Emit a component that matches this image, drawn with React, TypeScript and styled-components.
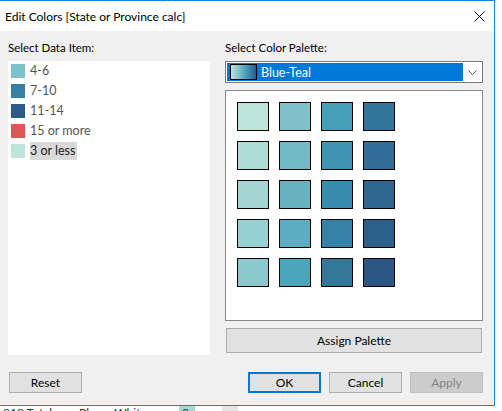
import React from 'react';
import styled, { createGlobalStyle } from 'styled-components';

const GlobalStyle = createGlobalStyle`
  html, body {
    margin: 0;
    padding: 0;
    background: #ffffff;
  }
  body {
    font-family: "Segoe UI", Lato, "Open Sans", sans-serif;
    font-size: 11.5px;
    color: #000;
  }
`;

const legend = [
    { label: '4-6', color: '#7dc1ca' },
    { label: '7-10', color: '#3580a3' },
    { label: '11-14', color: '#2d5a87' },
    { label: '15 or more', color: '#e15759' },
    { label: '3 or less', color: '#bce4d8', selected: true },
];

// column-major, light to dark
const palette = [
    ['#bce4d8', '#7fc1ca', '#449fb8', '#33759a'],
    ['#aedcd6', '#74bac6', '#3e96b3', '#316d96'],
    ['#a3d6d2', '#68b3c2', '#378dae', '#2f6690'],
    ['#97d0d0', '#5badbf', '#3582a6', '#2d5f8b'],
    ['#8bc9ce', '#4ba5bb', '#337899', '#2c5684'],
];

const Page = styled.div({
    width: '502px',
    height: '411px',
    overflow: 'hidden',
    display: 'flex',
    flexDirection: 'column',
})

const Dialog = styled.div({
    width: '495px',
    height: '406px',
    boxSizing: 'border-box',
    borderTop: '1px solid #1883d7',
    borderRight: '1px solid #1883d7',
    borderBottom: '1px solid #1883d7',
    background: '#f0f0f0',
    display: 'flex',
    flexDirection: 'column',
    flexShrink: 0,
})

const TitleBar = styled.div({
    height: '30px',
    background: '#ffffff',
    display: 'flex',
    alignItems: 'center',
    justifyContent: 'space-between',
    padding: '0 9px 0 5px',
    fontSize: '12px',
    color: '#000',
})

const CloseIcon = () => (
    <svg width="11" height="11" viewBox="0 0 11 11">
        <path d="M0.5 0.5 L10.5 10.5 M10.5 0.5 L0.5 10.5" stroke="#000" strokeWidth="1" />
    </svg>
)

const Main = styled.div({
    display: 'flex',
    gap: '15px',
    padding: '9px 0 0 8px',
})

const Column = styled.div<{ $width: number }>(p => ({
    width: `${p.$width}px`,
    display: 'flex',
    flexDirection: 'column',
}))

const Label = styled.div({
    height: '16px',
    lineHeight: '16px',
    marginBottom: '5px',
    color: '#000',
})

const ListBox = styled.div({
    height: '294px',
    background: '#ffffff',
    padding: '3px 0 0 3px',
    boxSizing: 'border-box',
    display: 'flex',
    flexDirection: 'column',
    gap: '6px',
})

const ListItem = styled.div({
    display: 'flex',
    alignItems: 'center',
    gap: '5px',
    height: '14px',
})

const Chip = styled.div<{ $color: string }>(p => ({
    width: '14px',
    height: '14px',
    background: p.$color,
}))

const ItemText = styled.span<{ $selected?: boolean }>(p => ({
    fontSize: '12.5px',
    lineHeight: '18px',
    color: p.$selected ? '#1a1a1a' : '#555555',
    background: p.$selected ? '#d9d9d9' : 'transparent',
    padding: '0 2px 0 0',
}))

const Select = styled.div({
    height: '22px',
    border: '1px solid #7a7a7a',
    background: '#ffffff',
    boxSizing: 'border-box',
    padding: '1px',
    display: 'flex',
    alignItems: 'stretch',
})

const SelectValue = styled.div({
    flex: 1,
    background: '#0078d7',
    display: 'flex',
    alignItems: 'center',
    gap: '4px',
    paddingLeft: '3px',
    color: '#ffffff',
    fontSize: '12.5px',
})

const Ramp = styled.div({
    width: '25px',
    height: '14px',
    border: '1px solid #000',
    background: 'linear-gradient(to right, #bce4d8, #6fb8c5 40%, #3a8fb3 70%, #2c5a86)',
})

const Chevron = styled.div({
    width: '18px',
    display: 'flex',
    alignItems: 'center',
    justifyContent: 'center',
})

const PaletteBox = styled.div({
    height: '231px',
    marginTop: '7px',
    border: '1px solid #828790',
    background: '#ffffff',
    boxSizing: 'border-box',
    padding: '11px',
    display: 'grid',
    gridTemplateColumns: 'repeat(4, 32px)',
    gridAutoRows: '29px',
    columnGap: '10px',
    rowGap: '10px',
    alignContent: 'start',
})

const Swatch = styled.div<{ $color: string }>(p => ({
    border: '1px solid #000',
    background: p.$color,
}))

const Button = styled.button<{ $variant?: 'default' | 'primary' | 'disabled' }>(p => ({
    width: '73px',
    height: '21px',
    padding: 0,
    fontFamily: 'inherit',
    fontSize: '12px',
    boxSizing: 'border-box',
    background: p.$variant === 'disabled' ? '#cccccc' : '#e1e1e1',
    color: p.$variant === 'disabled' ? '#838383' : '#000',
    border: p.$variant === 'primary'
        ? '2px solid #0078d7'
        : p.$variant === 'disabled' ? '1px solid #bfbfbf' : '1px solid #adadad',
}))

const WideButton = styled(Button)({
    width: 'auto',
    height: '25px',
    margin: '7px 1px 0',
})

const Footer = styled.div({
    display: 'flex',
    justifyContent: 'space-between',
    padding: '17px 11px 0 9px',
})

const ButtonGroup = styled.div({
    display: 'flex',
    gap: '8px',
})

const Behind = styled.div({
    display: 'flex',
    height: '14px',
    fontSize: '12px',
    lineHeight: '14px',
    color: '#333',
})

const BehindCell = styled.div<{ $width: number; $bg?: string }>(p => ({
    width: `${p.$width}px`,
    background: p.$bg || 'transparent',
    whiteSpace: 'nowrap',
    overflow: 'hidden',
    paddingLeft: '3px',
    boxSizing: 'border-box',
}))

export default function App() {
    return (
        <Page>
            <GlobalStyle />
            <Dialog>
                <TitleBar>
                    <span>Edit Colors [State or Province calc]</span>
                    <CloseIcon />
                </TitleBar>
                <Main>
                    <Column $width={202}>
                        <Label>Select Data Item:</Label>
                        <ListBox>
                            {legend.map(item => (
                                <ListItem key={item.label}>
                                    <Chip $color={item.color} />
                                    <ItemText $selected={item.selected}>{item.label}</ItemText>
                                </ListItem>
                            ))}
                        </ListBox>
                    </Column>
                    <Column $width={258}>
                        <Label>Select Color Palette:</Label>
                        <Select>
                            <SelectValue>
                                <Ramp />
                                <span>Blue-Teal</span>
                            </SelectValue>
                            <Chevron>
                                <svg width="9" height="5" viewBox="0 0 9 5">
                                    <path d="M0.5 0.5 L4.5 4.5 L8.5 0.5" stroke="#555" fill="none" strokeWidth="1" />
                                </svg>
                            </Chevron>
                        </Select>
                        <PaletteBox>
                            {palette.flat().map((c, i) => (
                                <Swatch key={i} $color={c} />
                            ))}
                        </PaletteBox>
                        <WideButton>Assign Palette</WideButton>
                    </Column>
                </Main>
                <Footer>
                    <Button>Reset</Button>
                    <ButtonGroup>
                        <Button $variant="primary">OK</Button>
                        <Button>Cancel</Button>
                        <Button $variant="disabled">Apply</Button>
                    </ButtonGroup>
                </Footer>
            </Dialog>
            <Behind>
                <BehindCell $width={76}>818 Totals</BehindCell>
                <BehindCell $width={103}>Player White</BehindCell>
                <BehindCell $width={16} $bg="#a6d6cf">2</BehindCell>
                <BehindCell $width={27} />
                <BehindCell $width={16} $bg="#e4e4e4" />
            </Behind>
        </Page>
    )
}
